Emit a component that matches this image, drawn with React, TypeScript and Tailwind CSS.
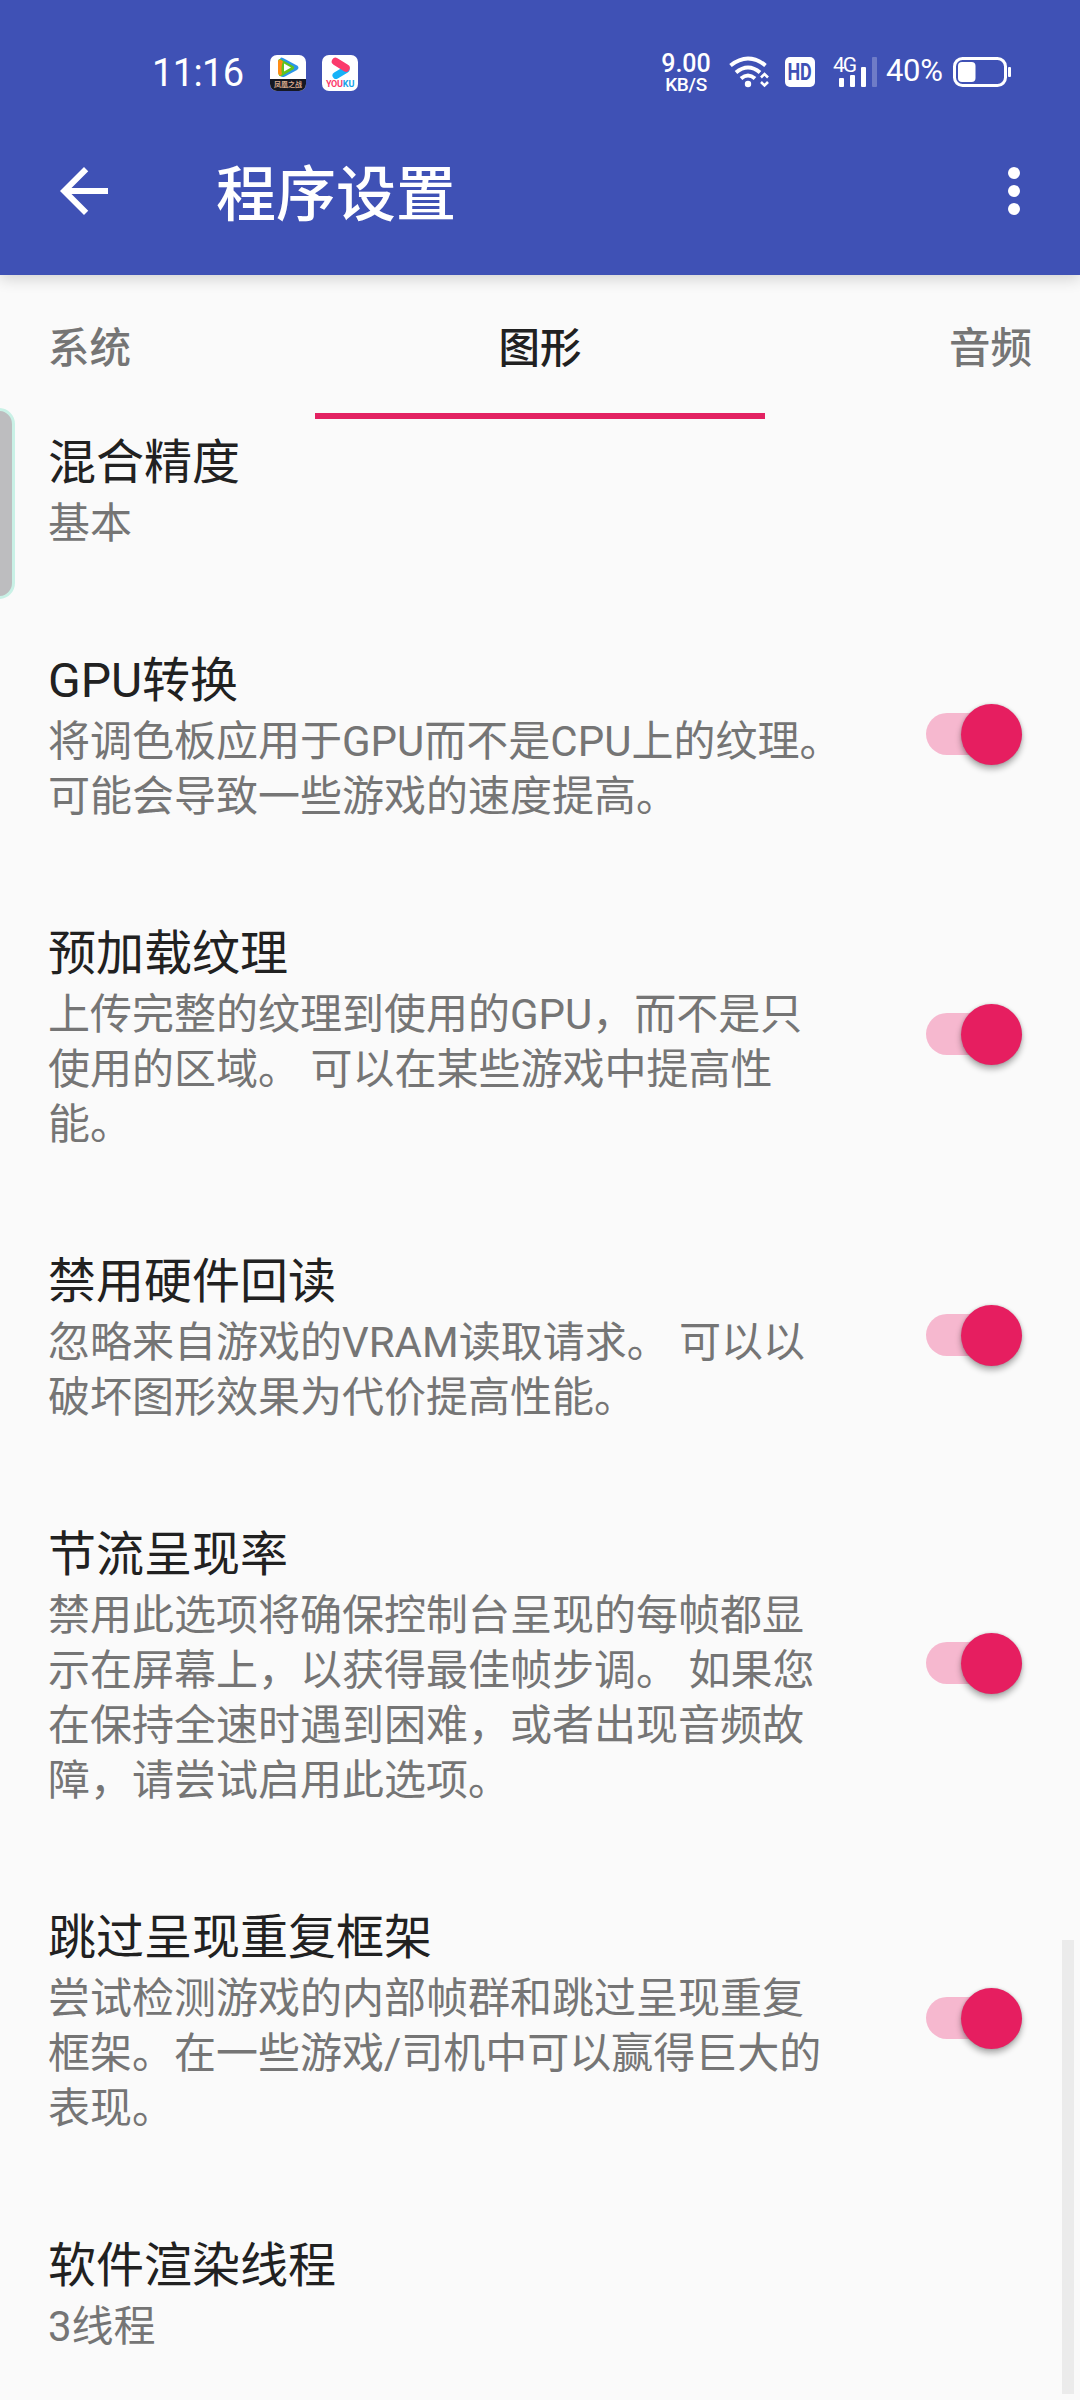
import React from "react";

type Setting = { title: string; lines: string[]; toggle?: boolean };

const settings: Setting[] = [
  { title: "混合精度", lines: ["基本"] },
  { title: "GPU转换", lines: ["将调色板应用于GPU而不是CPU上的纹理。", "可能会导致一些游戏的速度提高。"], toggle: true },
  { title: "预加载纹理", lines: ["上传完整的纹理到使用的GPU，而不是只", "使用的区域。 可以在某些游戏中提高性", "能。"], toggle: true },
  { title: "禁用硬件回读", lines: ["忽略来自游戏的VRAM读取请求。 可以以", "破坏图形效果为代价提高性能。"], toggle: true },
  {
    title: "节流呈现率",
    lines: ["禁用此选项将确保控制台呈现的每帧都显", "示在屏幕上，以获得最佳帧步调。 如果您", "在保持全速时遇到困难，或者出现音频故", "障，请尝试启用此选项。"],
    toggle: true,
  },
  { title: "跳过呈现重复框架", lines: ["尝试检测游戏的内部帧群和跳过呈现重复", "框架。在一些游戏/司机中可以赢得巨大的", "表现。"], toggle: true },
  { title: "软件渲染线程", lines: ["3线程"] },
];

function TencentVideoIcon() {
  return (
    <div className="flex h-9 w-9 flex-col overflow-hidden rounded-[7px] bg-white">
      <svg viewBox="0 0 36 24" className="h-6 w-9 shrink-0">
        <path d="M10 5 Q10 1.500 13 3 L27 10.500 Q30 12.500 27 15 L15 21.500 Q11 23 10 20 Z" fill="#2b96e8" />
        <path d="M8 7 Q8 3 11.500 4.500 L23 11 Q25.500 12.500 23 14.500 L12 21 Q9 22 8.500 19 Z" fill="#62c31c" />
        <path d="M8 7 Q8 4 11 5 L13 6.500 Q10.500 12 12 19 L10.500 20.500 Q8 20 8 17 Z" fill="#ff8b14" />
        <path d="M14 8.500 L21 12.500 L14 16.500 Z" fill="#fff" />
      </svg>
      <div className="flex h-3 items-center justify-center bg-[#151823] text-[7px] leading-none font-bold whitespace-nowrap text-[#d9a88a]">
        凤凰之战
      </div>
    </div>
  );
}

function YoukuIcon() {
  return (
    <div className="flex h-9 w-9 flex-col items-center overflow-hidden rounded-[7px] bg-white">
      <svg viewBox="0 0 36 24" className="h-6 w-9 shrink-0">
        <path d="M14 20.500 L24 14.500" stroke="#16b2f8" strokeWidth="7" strokeLinecap="round" />
        <path d="M13.500 6.500 L24 13" stroke="#fb3a6c" strokeWidth="7.500" strokeLinecap="round" />
      </svg>
      <div className="text-[9px] leading-[11px] font-bold tracking-[-0.2px]">
        <span className="text-[#fb3a6c]">YOU</span>
        <span className="text-[#16a2e8]">KU</span>
      </div>
    </div>
  );
}

function StatusBar() {
  return (
    <div className="flex h-[107px] items-start pt-[55px] pl-[152px]">
      <div className="-mt-[2px] w-[118px] text-[38px] leading-[40px] tracking-[-0.6px]">11:16</div>
      <div className="flex gap-4">
        <TencentVideoIcon />
        <YoukuIcon />
      </div>
      <div className="-mt-[3px] ml-[299px] flex w-[58px] flex-col items-center font-medium">
        <span className="text-[25px] leading-[23px]">9.00</span>
        <span className="text-[19px] leading-[19px] tracking-[-0.3px]">KB/S</span>
      </div>
      <svg viewBox="0 0 40 32" className="mt-[1px] ml-[14px] h-8 w-10" fill="none" stroke="#fff">
        <path d="M1.500 9.500 Q19 -4.500 36.500 9.500" strokeWidth="4" />
        <path d="M7 16.500 Q19 6.500 31 16.500" strokeWidth="4" />
        <path d="M12 22.500 Q19 16.500 26 22.500" strokeWidth="4" />
        <circle cx="19" cy="28" r="3.200" fill="#fff" stroke="none" />
        <path d="M32 21.500 L35.500 18 L39 21.500 M32 26 L35.500 29.500 L39 26" strokeWidth="2.600" />
      </svg>
      <div className="mt-[2px] ml-[16px] flex h-[30px] w-[30px] items-center justify-center rounded-[5px] bg-white text-[23px] leading-none font-bold text-[#3f51b5]">
        <span className="scale-x-[0.78]">HD</span>
      </div>
      <div className="relative ml-[16px] h-8 w-[46px]">
        <span className="absolute top-0 left-[2px] text-[21px] leading-[20px] tracking-[-2px]">4G</span>
        <div className="flex h-8 items-end justify-end gap-[6px]">
          <i className="h-[9px] w-[5px] rounded-[1px] bg-white" />
          <i className="h-[12px] w-[5px] rounded-[1px] bg-white" />
          <i className="h-[20px] w-[5px] rounded-[1px] bg-white" />
          <i className="h-[30px] w-[5px] rounded-[1px] bg-white/25" />
        </div>
      </div>
      <div className="ml-[9px] w-[66px] text-[31px] leading-[32px] tracking-[-0.3px]">40%</div>
      <svg viewBox="0 0 60 30" className="mt-[2px] h-[30px] w-[60px]">
        <rect x="2.500" y="1.500" width="51" height="27" rx="8" fill="none" stroke="#fff" strokeWidth="3" />
        <rect x="6" y="5" width="17.500" height="20" rx="4" fill="#fff" />
        <rect x="56" y="10" width="3" height="10" rx="1" fill="#fff" />
      </svg>
    </div>
  );
}

function Toolbar() {
  return (
    <div className="flex h-[168px] items-center pr-[30px] pl-[48px]">
      <svg viewBox="0 0 24 24" className="h-[72px] w-[72px]" fill="#fff">
        <path d="M20 11H7.830l5.590-5.590L12 4l-8 8 8 8 1.410-1.410L7.830 13H20v-2z" />
      </svg>
      <h1 className="ml-24 flex-1 pt-[9px] text-[60px] leading-[72px] font-medium">程序设置</h1>
      <svg viewBox="0 0 24 24" className="h-[72px] w-[72px]" fill="#fff">
        <circle cx="12" cy="6" r="2" />
        <circle cx="12" cy="12" r="2" />
        <circle cx="12" cy="18" r="2" />
      </svg>
    </div>
  );
}

function Tabs() {
  return (
    <div className="grid h-36 shrink-0 grid-cols-[315px_450px_315px] text-[41.5px] leading-[129px] font-medium text-[#757575]">
      <div className="pt-[9px] pl-[48px]">系统</div>
      <div className="h-36 border-b-[6px] border-[#e32262] pt-[9px] text-center text-[#212121]">图形</div>
      <div className="pt-[9px] pr-[48px] text-right">音频</div>
    </div>
  );
}

function Switch() {
  return (
    <div className="relative top-px h-[42px] w-[96px] rounded-full bg-[#f6b8cf]">
      <div className="absolute -top-[9px] right-0 h-[61px] w-[61px] rounded-full bg-[#e61e60] shadow-[0_4px_6px_rgba(0,0,0,0.32),0_0_3px_rgba(0,0,0,0.15)]" />
    </div>
  );
}

export default function App() {
  return (
    <div
      lang="zh-CN"
      className="relative flex h-[2400px] w-[1080px] flex-col overflow-hidden bg-[#fafafa] font-[Roboto,'Noto_Sans_CJK_SC',sans-serif]"
    >
      <header className="relative z-20 h-[275px] shrink-0 bg-[#3f51b5] text-white shadow-[0_4px_14px_rgba(0,0,0,0.16)]">
        <StatusBar />
        <Toolbar />
      </header>
      <Tabs />
      <main className="-mt-[41px] flex flex-col">
        {settings.map((s) => (
          <section key={s.title} className="flex shrink-0 items-center justify-between pr-[58px] pl-[48px]">
            <div className="pt-[52px] pb-[45px] whitespace-nowrap">
              <h2 className="text-[48px] leading-[66px] text-[#212121]">{s.title}</h2>
              {s.lines.map((l) => (
                <p key={l} className="text-[42px] leading-[55px] text-[#757575]">
                  {l}
                </p>
              ))}
            </div>
            {s.toggle && <Switch />}
          </section>
        ))}
      </main>
      <div className="absolute top-[408px] -left-5 h-[191px] w-[35px] rounded-[16px] border-[3px] border-[#c9f1e6] bg-[#bdbdbf]" />
      <div className="absolute top-[1940px] right-[6px] h-[454px] w-3 bg-[#ebebeb]" />
    </div>
  );
}
